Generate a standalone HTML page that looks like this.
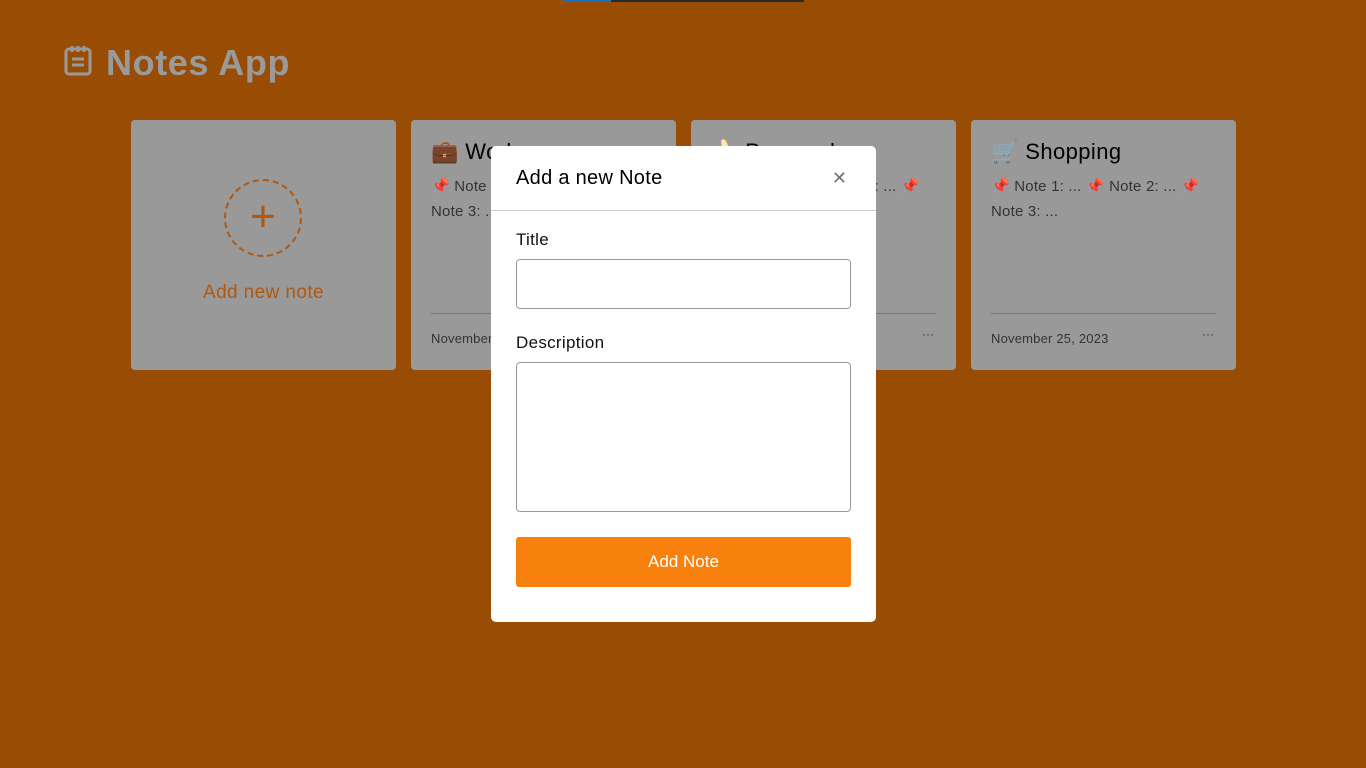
<!DOCTYPE html>
<html><head><meta charset="utf-8"><style>
*{box-sizing:border-box;margin:0;padding:0}
body{width:1366px;height:768px;background:#994d04;font-family:"Liberation Sans",sans-serif;position:relative;overflow:hidden}
.bar1{position:absolute;top:0;left:563px;width:48px;height:2px;background:#1a6fc0}
.bar2{position:absolute;top:0;left:611px;width:193px;height:2px;background:#2a2a2a}
h1{position:absolute;left:106px;top:42px;font-size:36px;font-weight:bold;color:#9a9a9a;letter-spacing:0.6px}
.card{position:absolute;top:120px;width:265px;height:250px;background:#999;border-radius:4px}
.add .circ{position:absolute;left:93px;top:59px;width:78px;height:78px;border:2px dashed #b05810;border-radius:50%;color:#b05810;font-size:44px;text-align:center;line-height:72px;font-weight:300}
.add .lbl{position:absolute;left:0;right:0;top:162px;text-align:center;color:#b05810;font-size:19px;letter-spacing:0.4px}
.t{position:absolute;left:20px;top:19px;font-size:22px;color:#000;letter-spacing:0.4px}
.d{position:absolute;left:20px;top:54px;width:225px;font-size:15px;color:#333;line-height:25px;letter-spacing:0.2px}
.hr{position:absolute;left:20px;right:20px;top:193px;border-top:1px solid #777}
.dt{position:absolute;left:20px;top:211px;font-size:13px;color:#333;letter-spacing:0.2px}
.dots{position:absolute;right:22px;top:207px;font-size:12px;color:#333}
.modal{position:absolute;left:491px;top:146px;width:385px;height:476px;background:#fff;border-radius:5px}
.mh{height:65px;border-bottom:1px solid #ccc;padding:21px 25px;font-size:20px;color:#000;letter-spacing:0.3px}
.x{position:absolute;right:29px;top:22px;font-size:18px;color:#6c757d}
.lab{position:absolute;left:25px;font-size:17px;color:#111;letter-spacing:0.3px}
.inp{position:absolute;left:25px;width:335px;border:1px solid #999;border-radius:4px}
.btn{position:absolute;left:25px;top:391px;width:335px;height:50px;background:#f8800c;border-radius:3px;color:#fff;font-size:17px;text-align:center;line-height:50px}
</style></head><body>
<div class="bar1"></div><div class="bar2"></div>
<svg style="position:absolute;left:64px;top:44px" width="28" height="32" viewBox="0 0 28 32"><rect x="2" y="5" width="24" height="25" rx="3" fill="none" stroke="#9a9a9a" stroke-width="3"/><path d="M8 2v6M14 2v6M20 2v6M8 15h12M8 21h12" stroke="#9a9a9a" stroke-width="3"/></svg>
<h1>Notes App</h1>
<div class="card add" style="left:131px"><div class="circ">+</div><div class="lbl">Add new note</div></div>
<div class="card" style="left:411px"><div class="t">💼 Work</div><div class="d">📌 Note 1: ... 📌 Note 2: ... 📌 Note 3: ...</div><div class="hr"></div><div class="dt">November 25, 2023</div><div class="dots">···</div></div>
<div class="card" style="left:691px"><div class="t">🍌 Personal</div><div class="d">📌 Note 1: ... 📌 Note 2: ... 📌 Note 3: ...</div><div class="hr"></div><div class="dt">November 25, 2023</div><div class="dots">···</div></div>
<div class="card" style="left:971px"><div class="t">🛒 Shopping</div><div class="d">📌 Note 1: ... 📌 Note 2: ... 📌 Note 3: ...</div><div class="hr"></div><div class="dt">November 25, 2023</div><div class="dots">···</div></div>
<div class="modal">
<div class="mh">Add a new Note</div><div class="x">✕</div>
<div class="lab" style="top:84px">Title</div>
<div class="inp" style="top:113px;height:50px"></div>
<div class="lab" style="top:187px">Description</div>
<div class="inp" style="top:216px;height:150px"></div>
<div class="btn">Add Note</div>
</div>
</body></html>
